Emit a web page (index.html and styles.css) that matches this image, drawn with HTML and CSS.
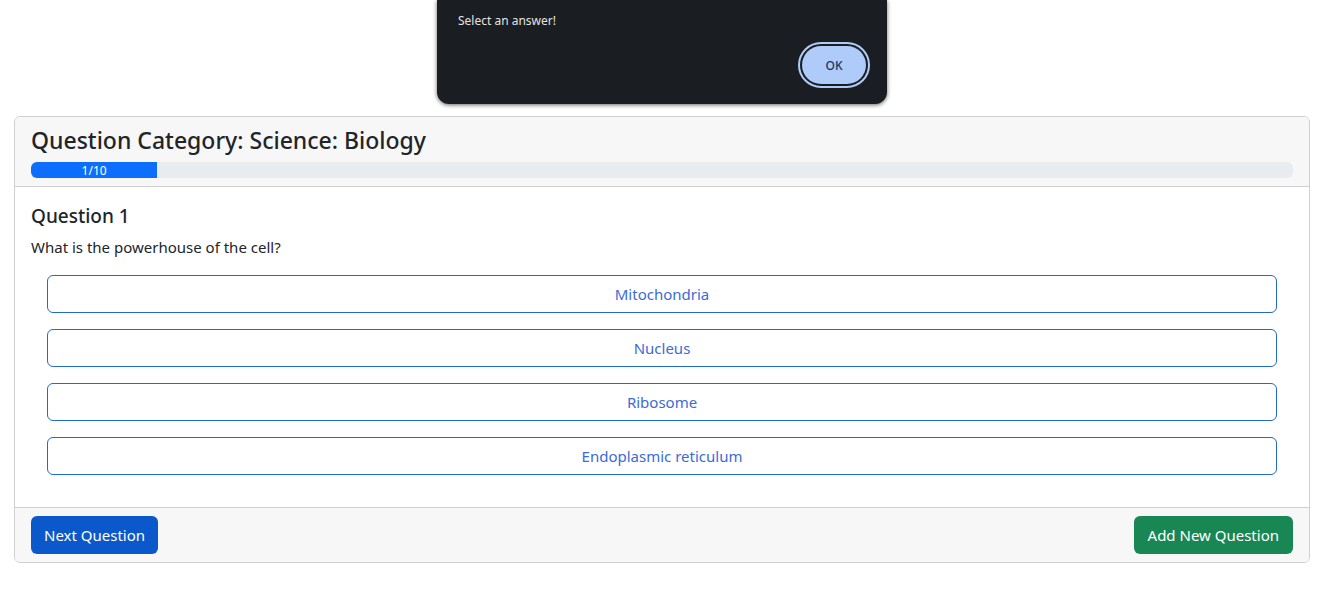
FILE: index.html
```html
<!DOCTYPE html>
<html lang="en">
<head>
<meta charset="utf-8">
<meta name="viewport" content="width=device-width, initial-scale=1">
<title>Quiz</title>
<link rel="stylesheet" href="styles.css">
</head>
<body>
<main class="page">
  <section class="card">
    <header class="card-header">
      <h1 class="category">Question Category: Science: Biology</h1>
      <div class="progress" role="progressbar" aria-label="Quiz progress" aria-valuenow="1" aria-valuemin="0" aria-valuemax="10">
        <div class="progress-bar" style="width: 10%">1/10</div>
      </div>
    </header>
    <div class="card-body">
      <h2 class="question-title">Question 1</h2>
      <p class="question-text">What is the powerhouse of the cell?</p>
      <div class="answers">
        <button type="button" class="btn btn-outline">Mitochondria</button>
        <button type="button" class="btn btn-outline">Nucleus</button>
        <button type="button" class="btn btn-outline">Ribosome</button>
        <button type="button" class="btn btn-outline">Endoplasmic reticulum</button>
      </div>
    </div>
    <footer class="card-footer">
      <button type="button" class="btn btn-primary">Next Question</button>
      <button type="button" class="btn btn-success">Add New Question</button>
    </footer>
  </section>
</main>
<div class="dialog" role="alertdialog" aria-labelledby="dialog-message">
  <p class="dialog-message" id="dialog-message">Select an answer!</p>
  <button type="button" class="dialog-ok">OK</button>
</div>
</body>
</html>
```
FILE: styles.css
```css
* {
  box-sizing: border-box;
}

body {
  margin: 0;
  background: #fff;
  color: #212529;
  font-family: "Segoe UI", "Noto Sans", "Open Sans", sans-serif;
  font-size: 15px;
  line-height: 24px;
}

.page {
  padding: 116px 16px 24px 14px;
}

.card {
  border: 1px solid #d0d0d1;
  border-radius: 6px;
  overflow: hidden;
}

.card-header {
  padding: 9px 16px 8px;
  background: #f7f7f7;
  border-bottom: 1px solid #d0d0d1;
}

.category {
  margin: 0 0 8px;
  font-size: 23px;
  font-weight: 500;
  line-height: 28px;
}

.progress {
  display: flex;
  height: 16px;
  overflow: hidden;
  border-radius: 6px;
  background: #e9ecef;
}

.progress-bar {
  background: #0d6efd;
  color: #fff;
  font-size: 12px;
  line-height: 18px;
  text-align: center;
}

.card-body {
  padding: 17px 16px 16px;
}

.question-title {
  margin: 0 0 7px;
  font-size: 19px;
  font-weight: 500;
  line-height: 24px;
}

.question-text {
  margin: 0;
}

.answers {
  display: flex;
  flex-direction: column;
  gap: 16px;
  padding: 16px;
}

.btn {
  padding: 6px 12px;
  border: 1px solid transparent;
  border-radius: 6px;
  font-family: inherit;
  font-size: 15px;
  line-height: 24px;
  cursor: pointer;
}

.btn-outline {
  background: #fff;
  border-color: #216bc9;
  color: #3a6bd9;
}

.btn-primary {
  background: #0a58ca;
  color: #fff;
}

.btn-success {
  padding: 6px 13px;
  background: #198754;
  color: #fff;
}

.card-footer {
  display: flex;
  justify-content: space-between;
  padding: 8px 16px;
  background: #f7f7f7;
  border-top: 1px solid #d0d0d1;
}

.dialog {
  position: absolute;
  top: 0;
  left: 0;
  right: 2px;
  display: flex;
  flex-direction: column;
  width: 450px;
  margin: 0 auto;
  padding: 13px 21px 20px;
  border-radius: 0 0 12px 12px;
  background: #1a1d21;
  box-shadow: 0 1px 4px rgba(0, 0, 0, 0.6);
}

.dialog-message {
  margin: 0 0 17px;
  color: #e3e3e3;
  font-size: 12px;
  line-height: 16px;
}

.dialog-ok {
  align-self: flex-end;
  width: 64px;
  height: 38px;
  border: 0;
  border-radius: 19px;
  background: #aecbfa;
  outline: 2px solid #aecbfa;
  outline-offset: 2px;
  color: #1b3360;
  font-family: inherit;
  font-size: 12px;
  font-weight: 500;
  cursor: pointer;
}
```
